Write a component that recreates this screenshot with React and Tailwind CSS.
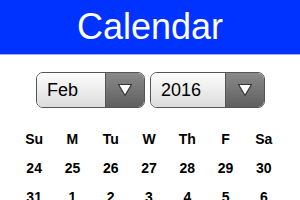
const days = ["Su", "M", "Tu", "W", "Th", "F", "Sa"];
const weeks = [
  [24, 25, 26, 27, 28, 29, 30],
  [31, 1, 2, 3, 4, 5, 6],
];

function Select({ value, width }) {
  return (
    <div
      className={`flex h-[36px] overflow-hidden rounded-[7px] border border-[#555] ${width}`}
    >
      <div className="flex flex-1 items-center bg-gradient-to-b from-[#fdfdfd] to-[#dcdcdc] pl-[10px] text-[18px] text-black">
        {value}
      </div>
      <div className="flex w-[39px] items-center justify-center border-l border-[#555] bg-gradient-to-b from-[#8a8a8a] to-[#5f5f5f]">
        <svg width="16" height="14" viewBox="0 0 16 14">
          <path d="M1.5 1.5 L14.5 1.5 L8 12.5 Z" fill="#fff" stroke="#333" strokeWidth="1.2" strokeLinejoin="round" />
        </svg>
      </div>
    </div>
  );
}

export default function App() {
  return (
    <div className="h-[200px] w-[300px] overflow-hidden bg-white font-['Liberation_Sans',Arial,sans-serif]">
      <div className="flex h-[55px] items-center justify-center border-b border-[#9db2ff] bg-[#0033ff] text-[36px] text-white">
        Calendar
      </div>
      <div className="mt-[17px] flex gap-[5px] pl-[36px]">
        <Select value="Feb" width="w-[109px]" />
        <Select value="2016" width="w-[115px]" />
      </div>
      <div className="ml-[15px] mt-[17px] grid w-[268px] grid-cols-7 text-[14px] font-bold text-black">
        {days.map((d) => (
          <div key={d} className="flex h-[29px] items-center justify-center">
            {d}
          </div>
        ))}
        {weeks.flat().map((n, i) => (
          <div key={i} className="flex h-[29px] items-center justify-center">
            {n}
          </div>
        ))}
      </div>
    </div>
  );
}
